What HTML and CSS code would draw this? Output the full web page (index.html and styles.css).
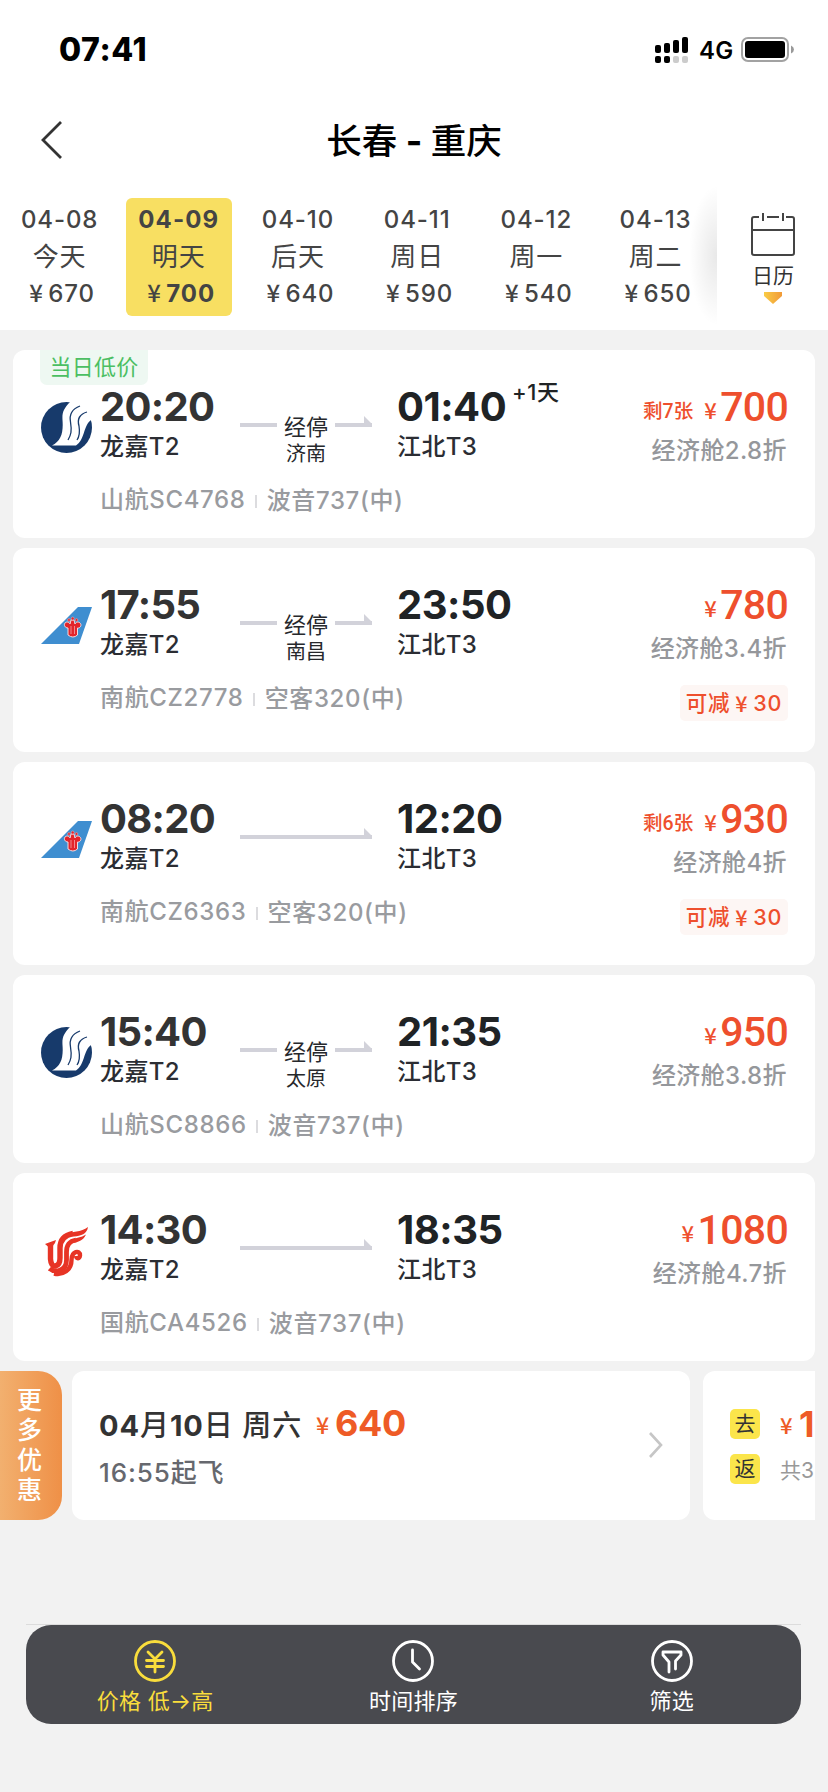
FILE: index.html
```html
<!DOCTYPE html>
<html lang="zh-CN">
<head>
<meta charset="utf-8">
<title>长春 - 重庆</title>
<link rel="stylesheet" href="styles.css">
</head>
<body>
<svg class="defs" aria-hidden="true">
  <symbol id="sc" viewBox="0 0 51 51">
    <circle cx="25.5" cy="25.5" r="25.5" fill="#173a6b"/>
    <path d="M30-1C23 6 21 10 21.500 18C22.500 31 20 39 11 43.500H35C44 38 42 24 50 18L53 8V-2Z" fill="#fff"/>
    <path d="M39 4C31 7 28 12 29.500 20C31 29 30 33 27 38M46 10C39 12 36 17 38 24C39 30 38 35 36 38" fill="none" stroke="#173a6b" stroke-width="1.300"/>
  </symbol>
  <symbol id="cz" viewBox="0 0 51 37">
    <path d="M37 0H51L38 37H0Z" fill="#3f8ed0"/>
    <path d="M27 28V21C24 21 22.500 18 24 16C26 14 28.500 15.500 29 17L30 13H33L34 17C35 14.500 38 14.500 39.500 16.500C41 19 38.500 21.500 36.500 21V28Q32 32 27 28Z" fill="#e3242b" stroke="#f5d9dc" stroke-width="1"/>
    <path d="M30 19V27M33.500 19V27" stroke="#f5b5b8" stroke-width=".7"/>
    <g fill="#e3242b" stroke="#f5d9dc" stroke-width=".4"><circle cx="28" cy="13" r="1.400"/><circle cx="31.700" cy="11.500" r="1.500"/><circle cx="35.500" cy="13" r="1.400"/></g>
  </symbol>
  <symbol id="ca" viewBox="0 0 51 51">
    <g fill="none" stroke="#e73425" stroke-linecap="butt">
      <path d="M9.500 18V32Q10 39.500 14.500 39Q19 38 19 31V21C19 12 24 8 32 6.500" stroke-width="5.400"/>
      <path d="M8.500 41.500C13 45.500 25.500 45 25.500 33V25C25.500 17 29 14 35 13" stroke-width="4.800"/>
      <path d="M13 46.500C22 48.500 30.500 43 30.500 33C30.500 24 39 22.500 39 28.500C38.500 32 35.500 32 35 29" stroke-width="4.400"/>
    </g>
    <path d="M24 9C31 3 40 6 47 0C46 7 40 9 33 9.500ZM30 14C35 10 40 11 45 7.500C42 14 37 15 32 16ZM4 17L8 15.500L15 13L14 16L11 20H7.500Z" fill="#e73425"/>
  </symbol>
</svg>

<header class="top">
  <div class="status">
    <span class="clock">07:41</span>
    <svg class="signal" viewBox="0 0 33 26"><rect y="8" width="6" height="8" rx="2"/><rect x="9" y="6" width="6" height="10" rx="2"/><rect x="18" y="3" width="6" height="13" rx="2"/><rect x="27" width="6" height="16" rx="2"/><rect y="19" width="6" height="7" rx="2"/><rect x="9" y="19" width="6" height="7" rx="2"/><g fill="#ccc"><rect x="18" y="19" width="6" height="7" rx="2"/><rect x="27" y="19" width="6" height="7" rx="2"/></g></svg>
    <span class="net">4G</span>
    <svg class="battery" viewBox="0 0 54 26"><rect x="1" y="1" width="46" height="23" rx="6" fill="none" stroke="#a2a2a2" stroke-width="2"/><rect x="4" y="4" width="40" height="17" rx="3"/><path d="M50 8.500Q53 10 53 12.500T50 16.500Z" fill="#999"/></svg>
  </div>
  <div class="nav">
    <svg class="back" viewBox="0 0 22 38"><path d="M20 1L2 19L20 37" fill="none" stroke="#333" stroke-width="2.800"/></svg>
    <h1 class="title">长春 <b>-</b> 重庆</h1>
  </div>
  <div class="dates">
    <div class="strip">
      <div class="day"><span>04-08</span><b>今天</b><span class="fare"><i>¥</i>670</span></div>
      <div class="day on"><span>04-09</span><b>明天</b><span class="fare"><i>¥</i>700</span></div>
      <div class="day"><span>04-10</span><b>后天</b><span class="fare"><i>¥</i>640</span></div>
      <div class="day"><span>04-11</span><b>周日</b><span class="fare"><i>¥</i>590</span></div>
      <div class="day"><span>04-12</span><b>周一</b><span class="fare"><i>¥</i>540</span></div>
      <div class="day"><span>04-13</span><b>周二</b><span class="fare"><i>¥</i>650</span></div>
    </div>
    <div class="calendar">
      <svg class="cal-icon" viewBox="0 0 44 44"><path d="M8 5H3Q1 5 1 7V41Q1 43 3 43H41Q43 43 43 41V7Q43 5 41 5H35M16 5H28M1 18H43M12 1V9M32 1V9" fill="none" stroke="#444" stroke-width="2"/></svg>
      <span>日历</span>
      <svg class="cal-tip" viewBox="0 0 18 12"><defs><linearGradient id="tip"><stop stop-color="#f9cc45"/><stop offset="1" stop-color="#f19a38"/></linearGradient></defs><path d="M0 0H18V4L9 12L0 4Z" fill="url(#tip)"/></svg>
    </div>
  </div>
</header>

<main class="list">
  <article class="card">
    <span class="low">当日低价</span>
    <svg class="logo"><use href="#sc"/></svg>
    <div class="from"><time>20:20</time><p>龙嘉T2</p></div>
    <div class="route"><div class="line"><s></s><em>经停</em><s class="head"></s></div><small>济南</small></div>
    <div class="to"><time>01:40<sup>+1天</sup></time><p>江北T3</p></div>
    <div class="price"><div class="sum"><small>剩7张</small><i>¥</i><strong>700</strong></div><p>经济舱2.8折</p></div>
    <div class="flight"><span>山航SC4768</span><span>波音737(中)</span></div>
  </article>
  <article class="card tall">
    <svg class="logo"><use href="#cz"/></svg>
    <div class="from"><time>17:55</time><p>龙嘉T2</p></div>
    <div class="route"><div class="line"><s></s><em>经停</em><s class="head"></s></div><small>南昌</small></div>
    <div class="to"><time>23:50</time><p>江北T3</p></div>
    <div class="price"><div class="sum"><i>¥</i><strong>780</strong></div><p>经济舱3.4折</p><span class="cut">可减<i>¥</i>30</span></div>
    <div class="flight"><span>南航CZ2778</span><span>空客320(中)</span></div>
  </article>
  <article class="card tall third">
    <svg class="logo"><use href="#cz"/></svg>
    <div class="from"><time>08:20</time><p>龙嘉T2</p></div>
    <div class="route"><div class="line"><s class="head"></s></div></div>
    <div class="to"><time>12:20</time><p>江北T3</p></div>
    <div class="price"><div class="sum"><small>剩6张</small><i>¥</i><strong>930</strong></div><p>经济舱4折</p><span class="cut">可减<i>¥</i>30</span></div>
    <div class="flight"><span>南航CZ6363</span><span>空客320(中)</span></div>
  </article>
  <article class="card">
    <svg class="logo"><use href="#sc"/></svg>
    <div class="from"><time>15:40</time><p>龙嘉T2</p></div>
    <div class="route"><div class="line"><s></s><em>经停</em><s class="head"></s></div><small>太原</small></div>
    <div class="to"><time>21:35</time><p>江北T3</p></div>
    <div class="price"><div class="sum"><i>¥</i><strong>950</strong></div><p>经济舱3.8折</p></div>
    <div class="flight"><span>山航SC8866</span><span>波音737(中)</span></div>
  </article>
  <article class="card">
    <svg class="logo phoenix"><use href="#ca"/></svg>
    <div class="from"><time>14:30</time><p>龙嘉T2</p></div>
    <div class="route"><div class="line"><s class="head"></s></div></div>
    <div class="to"><time>18:35</time><p>江北T3</p></div>
    <div class="price"><div class="sum"><i>¥</i><strong>1080</strong></div><p>经济舱4.7折</p></div>
    <div class="flight"><span>国航CA4526</span><span>波音737(中)</span></div>
  </article>
</main>

<section class="more">
  <div class="tab">更多优惠</div>
  <div class="offer">
    <div class="offer-text">
      <div class="offer-date"><span><b>04</b>月<b>10</b>日 周六</span><i>¥</i><strong>640</strong></div>
      <p>16:55起飞</p>
    </div>
    <svg class="go" viewBox="0 0 16 28"><path d="M2 2L13 14L2 26" fill="none" stroke="#c6c6c6" stroke-width="2.600"/></svg>
  </div>
  <div class="offer trip">
    <div class="leg"><b>去</b><i>¥</i><strong>1</strong></div>
    <div class="leg"><b>返</b><span>共3</span></div>
  </div>
</section>

<footer class="foot">
  <div class="bar">
    <div class="tool active">
      <svg viewBox="0 0 42 42"><circle cx="21" cy="21" r="19.500"/><path d="M14 12L21 19L28 12M21 19V32M12.500 20.500H29.500M12.500 26.500H29.500"/></svg>
      <span>价格 低→高</span>
    </div>
    <div class="tool">
      <svg viewBox="0 0 42 42"><circle cx="21" cy="21" r="19.500"/><path d="M20.500 10V22L27.500 29"/></svg>
      <span>时间排序</span>
    </div>
    <div class="tool">
      <svg viewBox="0 0 42 42"><circle cx="21" cy="21" r="19.500"/><path d="M18 32V22L12 15V12H30V15L24.500 21V29"/></svg>
      <span>筛选</span>
    </div>
  </div>
</footer>
</body>
</html>
```
FILE: styles.css
```css
* { box-sizing: border-box; }
body {
  margin: 0;
  width: 828px;
  height: 1792px;
  overflow: hidden;
  background: #f2f2f2;
  font-family: Inter, "Noto Sans CJK SC", sans-serif;
  color: #333;
}
p, h1 { margin: 0; font-weight: 400; }
i, em { font-style: normal; }
i { font-family: "Noto Sans CJK SC", sans-serif; font-weight: 500; transform: translateY(-2px); }
svg { display: block; flex: none; }
.defs { position: absolute; width: 0; height: 0; }

/* header */
.top { height: 330px; background: #fff; }
.status { display: flex; align-items: center; height: 99px; padding-left: 59px; color: #000; }
.clock { width: 596px; font-size: 32px; font-weight: 800; letter-spacing: .6px; }
.signal { width: 33px; height: 26px; }
.net { width: 42px; margin: 2px 0 0 11px; font-size: 24px; font-weight: 600; letter-spacing: .3px; }
.battery { width: 54px; height: 26px; }
.nav { display: grid; grid-template-columns: 64px 1fr 64px; align-items: center; height: 82px; }
.back { width: 22px; height: 38px; margin-left: 41px; }
.title { padding-top: 3px; text-align: center; font-size: 35.500px; font-weight: 500; color: #000; line-height: 44px; white-space: nowrap; word-spacing: -1px; }
.dates { display: flex; height: 149px; }
.strip {
  display: flex;
  width: 717px;
  padding-top: 17px;
  background: radial-gradient(ellipse 28px 70px at 100% 50%, rgba(0,0,0,.09), rgba(0,0,0,0)) no-repeat;
}
.day {
  display: flex;
  flex-direction: column;
  align-items: center;
  flex: none;
  width: 106px;
  height: 118px;
  margin: 0 6.600px;
  padding-top: 3px;
  border-radius: 6px;
  font-size: 24px;
  font-weight: 500;
  line-height: 37px;
  letter-spacing: .9px;
  color: #444;
}
.day b { font-weight: 400; font-size: 26px; }
.fare { display: flex; padding-left: 5px; }
.fare i { width: 19px; letter-spacing: 0; }
.day.on { background: #f8df62; font-weight: 700; letter-spacing: 1.100px; }
.calendar { display: flex; flex-direction: column; align-items: center; width: 111px; padding: 31px 0 0 1px; color: #333; font-size: 21px; line-height: 32px; }
.cal-icon { width: 44px; height: 44px; margin-bottom: 4px; }
.cal-tip { width: 18px; height: 12px; }

/* flight cards */
.list { display: flex; flex-direction: column; gap: 10px; padding: 20px 13px 10px; }
.card {
  position: relative;
  display: grid;
  grid-template-columns: 59px 140px 157px 190px 1fr;
  grid-template-rows: 80px 1fr;
  height: 188px;
  padding: 33px 27px 0 28px;
  border-radius: 12px;
  background: #fff;
}
.card.tall { height: 204px; }
.card.third { height: 203px; }
.low {
  position: absolute;
  left: 27px;
  top: 0;
  width: 108px;
  height: 35px;
  border-radius: 0 0 7px 7px;
  background: #eef8f2;
  color: #4bbf62;
  font-size: 22px;
  line-height: 35px;
  text-align: center;
  letter-spacing: .3px;
}
.logo { width: 51px; height: 51px; margin-top: 19px; }
.phoenix { margin-top: 21px; }
.from time, .to time { display: block; font-size: 40px; line-height: 48px; font-weight: 700; white-space: nowrap; letter-spacing: -.5px; }
.from time { letter-spacing: -.7px; }
.to time { color: #202325; }
.from p, .to p { font-size: 24px; line-height: 31px; font-weight: 500; color: #2b2d33; letter-spacing: .4px; }
sup { margin-left: 6px; font-size: 22px; font-weight: 500; line-height: 0; vertical-align: 21px; letter-spacing: .5px; }
.route { width: 132px; padding-top: 30px; text-align: center; color: #26282c; }
.line { display: flex; align-items: center; justify-content: space-between; height: 28px; }
.line s { flex: 0 0 37px; height: 4px; margin-bottom: 4px; background: #d2d2da; }
.line s:only-child { flex: 1; }
.line .head { height: 11px; margin-bottom: 11px; background: linear-gradient(#d2d2da, #d2d2da) bottom / 100% 4px no-repeat; }
.line .head::after { content: ""; display: block; width: 8px; height: 11px; margin-left: auto; background: #d2d2da; clip-path: polygon(0 0, 100% 8px, 100% 100%, 0 100%); }
.line em { font-size: 22px; line-height: 30px; }
.route small { display: block; font-size: 20px; line-height: 26px; }
.price { display: flex; flex-direction: column; align-items: flex-end; grid-row: 1 / 3; grid-column: 5; color: #ee4f2d; white-space: nowrap; }
.sum { display: flex; align-items: baseline; height: 48px; line-height: 48px; }
.sum small { margin-right: 11px; font-family: Roboto, "Noto Sans CJK SC", sans-serif; font-size: 19.500px; font-weight: 500; transform: translateY(-3px); }
.sum i { width: 16px; font-size: 22px; line-height: 30px; }
.sum strong { font: 500 41px/48px Roboto, sans-serif; letter-spacing: -.7px; }
.price p { margin: 3px 1px 0 0; font-size: 24px; line-height: 34px; font-weight: 500; color: #95979b; letter-spacing: .4px; }
.cut { display: flex; width: 108px; height: 36px; margin-top: 19px; border-radius: 5px; background: #fdf6f4; justify-content: center; font-size: 21.500px; line-height: 37px; font-weight: 500; letter-spacing: .8px; }
.cut i { width: 23px; text-align: center; transform: translateY(-1px); }
.flight { display: flex; grid-column: 2 / 5; grid-row: 2; margin-top: 20px; height: 34px; font-size: 24px; line-height: 33px; font-weight: 500; color: #999b9f; letter-spacing: .65px; white-space: nowrap; }
.flight span + span { display: flex; align-items: center; }
.flight span + span::before { content: ""; width: 2px; height: 13px; margin: 3px 10px 0 9px; background: #dcdcdf; }

/* promotions */
.more { display: flex; height: 149px; width: 815px; overflow: hidden; }
.tab {
  flex: none;
  width: 62px;
  margin-right: 10px;
  padding: 14px 17px 0 17px;
  border-radius: 0 24px 24px 0;
  background: linear-gradient(90deg, #f2b06f, #ef9047);
  color: #fff;
  font-size: 25px;
  line-height: 30px;
  word-break: break-all;
  font-weight: 500;
}
.offer { display: flex; align-items: center; justify-content: space-between; flex: none; width: 618px; padding: 0 26px 0 27px; border-radius: 12px; background: #fff; }
.offer-date { display: flex; align-items: baseline; height: 44px; line-height: 44px; color: #ee5b26; }
.offer-date span { width: 217px; color: #333; font-size: 29px; font-weight: 500; letter-spacing: .9px; white-space: nowrap; }
.offer-date i { width: 19px; font-size: 23px; line-height: 30px; }
.offer-date strong { font-size: 36px; font-weight: 700; letter-spacing: -.3px; }
.offer p { margin-top: 10px; font-size: 26px; line-height: 36px; font-weight: 500; letter-spacing: .9px; color: #66686e; }
.go { width: 16px; height: 28px; margin-bottom: 2px; }
.trip { flex-direction: column; justify-content: flex-start; align-items: flex-start; gap: 3px; width: 200px; margin-left: 13px; padding: 31px 27px; }
.leg { display: flex; align-items: center; height: 44px; color: #ee5b26; }
.leg b { width: 30px; height: 30px; margin-right: 20px; border-radius: 5px; background: #fbe54b; color: #333; font-size: 21px; line-height: 30px; font-weight: 400; text-align: center; }
.leg i { width: 19px; font-size: 22px; transform: none; }
.leg strong { font-size: 36px; }
.leg span { color: #999; font-size: 21px; }

/* sort bar */
.foot { width: 775px; margin: 104px 0 0 26px; border-top: 1px solid #dcdcdc; }
.bar { display: flex; height: 99px; background: #494a4f; border-radius: 25px; }
.tool { display: flex; flex-direction: column; align-items: center; flex: 1; padding-top: 15px; color: #fff; font-size: 22px; line-height: 36px; letter-spacing: .3px; }
.tool svg { width: 42px; height: 42px; fill: none; stroke: currentColor; stroke-width: 2.800; stroke-linecap: round; stroke-linejoin: round; }
.tool span { margin-top: 1px; }
.tool.active { color: #f9dd3c; }
```
